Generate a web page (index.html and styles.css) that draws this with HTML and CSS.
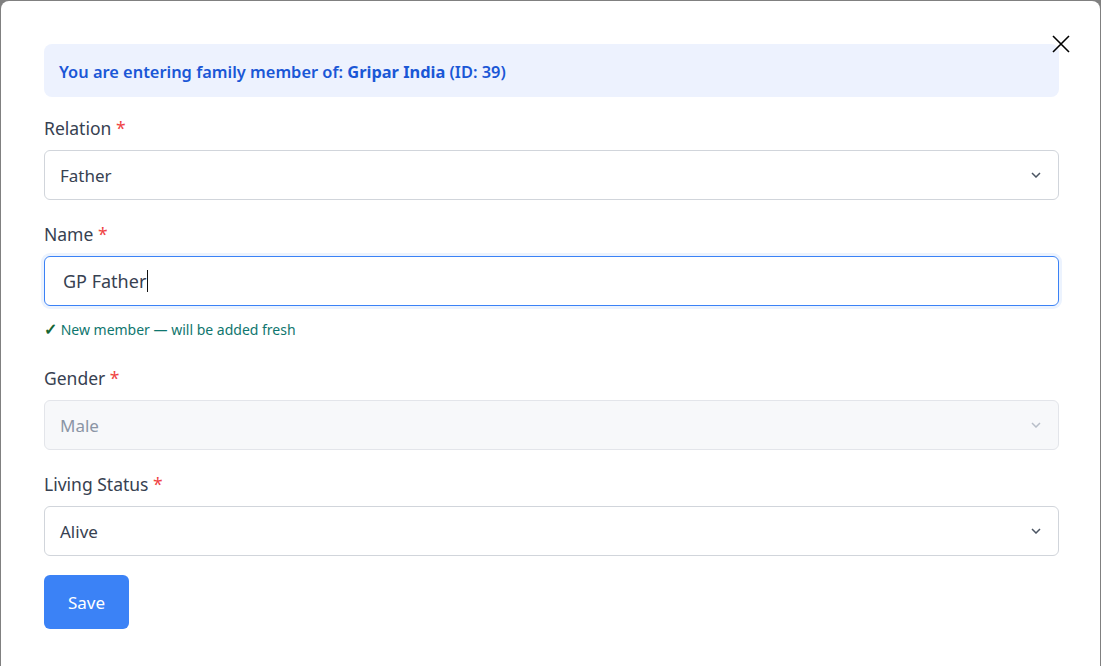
FILE: index.html
```html
<!DOCTYPE html>
<html>
<head>
<meta charset="utf-8">
<link rel="stylesheet" href="styles.css">
</head>
<body>
<div class="dialog">
  <button class="close" aria-label="Close">
    <svg width="20" height="20" viewBox="0 0 20 20"><path d="M2 2 L18 18 M18 2 L2 18" stroke="#000" stroke-width="1.6" fill="none"/></svg>
  </button>
  <div class="banner">You are entering family member of: <strong>Gripar India</strong> (ID: 39)</div>
  <form class="form">
    <div class="field">
      <label class="label">Relation <span class="req">*</span></label>
      <div class="select"><span>Father</span><svg class="chev" width="10" height="6" viewBox="0 0 10 6"><path d="M1 1 L5 5 L9 1" stroke="#4b5563" stroke-width="1.5" fill="none"/></svg></div>
    </div>
    <div class="field">
      <label class="label">Name <span class="req">*</span></label>
      <div class="input focused"><span>GP Father</span><span class="caret"></span></div>
      <div class="hint"><span class="check">✓</span> New member — will be added fresh</div>
    </div>
    <div class="field">
      <label class="label">Gender <span class="req">*</span></label>
      <div class="select disabled"><span>Male</span><svg class="chev" width="10" height="6" viewBox="0 0 10 6"><path d="M1 1 L5 5 L9 1" stroke="#b8bec8" stroke-width="1.5" fill="none"/></svg></div>
    </div>
    <div class="field">
      <label class="label">Living Status <span class="req">*</span></label>
      <div class="select"><span>Alive</span><svg class="chev" width="10" height="6" viewBox="0 0 10 6"><path d="M1 1 L5 5 L9 1" stroke="#4b5563" stroke-width="1.5" fill="none"/></svg></div>
    </div>
    <div class="actions"><button type="button" class="save">Save</button></div>
  </form>
</div>
</body>
</html>
```
FILE: styles.css
```css
* { box-sizing: border-box; }
html, body { margin: 0; height: 100%; }
body {
  background: #808080;
  padding: 1px 1px 0 1px;
  font-family: "Noto Sans", "Open Sans", sans-serif;
  color: #374151;
  overflow: hidden;
}
.dialog {
  position: relative;
  background: #fff;
  border-radius: 8px 8px 0 0;
  height: 100%;
  padding: 43px 41px 0 43px;
}
.close {
  position: absolute;
  top: 33px;
  right: 29px;
  background: none;
  border: 0;
  padding: 0;
  width: 20px;
  height: 20px;
  display: flex;
}
.banner {
  background: #edf2fe;
  color: #1a57d6;
  border-radius: 8px;
  padding: 17px 15px 15px;
  font-size: 16.4px;
  line-height: 21px;
  font-weight: 600;
}
.banner strong { font-weight: 700; }
.form {
  display: flex;
  flex-direction: column;
  margin-top: 19px;
}
.field {
  display: flex;
  flex-direction: column;
  margin-bottom: 22px;
}
.label {
  font-size: 17.5px;
  line-height: 24px;
  margin-bottom: 10px;
  color: #374151;
}
.req { color: #ef4444; }
.select, .input {
  height: 50px;
  border: 1px solid #d1d5db;
  border-radius: 6px;
  display: flex;
  align-items: center;
  padding: 0 15px;
  font-size: 17px;
  color: #374151;
}
.select { justify-content: space-between; }
.chev { margin-right: 2px; }
.select.disabled {
  background: #f7f8fa;
  border-color: #e3e5ea;
  color: #8b95a5;
}
.input.focused {
  border-color: #3b82f6;
  box-shadow: 0 0 0 3px #ecf3fe;
  padding-left: 18px;
  font-size: 18px;
}
.caret {
  display: inline-block;
  width: 1px;
  height: 22px;
  background: #111;
  margin-left: 1px;
}
.hint {
  margin-top: 13px;
  font-size: 14px;
  line-height: 20px;
  color: #0f766e;
  margin-bottom: 4px;
}
.check { font-weight: 700; color: #166534; font-size: 16px; line-height: 20px; }
.actions { margin-top: -3px; }
.save {
  background: #3b82f6;
  color: #fff;
  border: 0;
  border-radius: 6px;
  width: 85px;
  height: 54px;
  font-family: inherit;
  font-size: 17px;
}
```
